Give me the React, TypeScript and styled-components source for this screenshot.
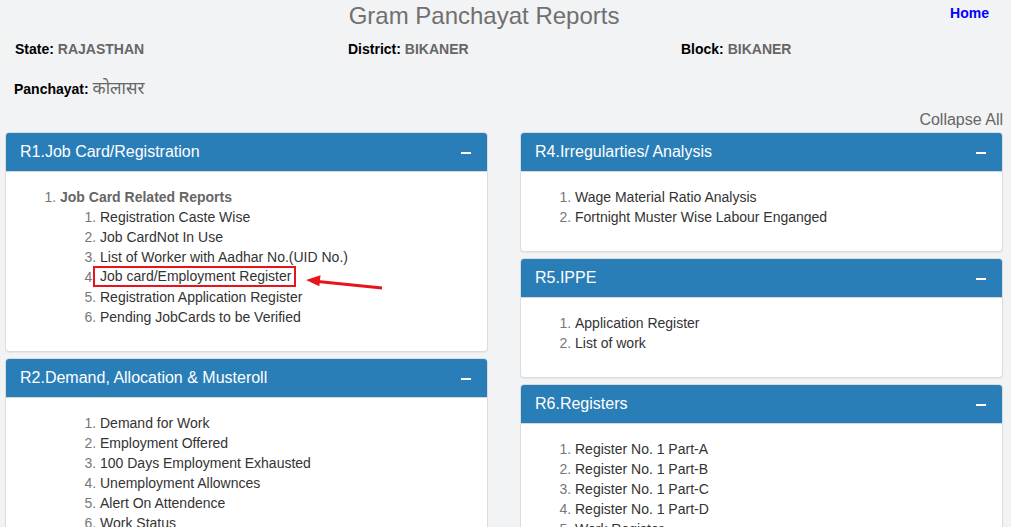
import styled, { createGlobalStyle } from 'styled-components';

type ReportItem = {
	label: string;
	highlighted?: boolean;
};

type Section = {
	title: string;
	heading?: string;
	items: ReportItem[];
};

const GlobalStyle = createGlobalStyle`
	body {
		margin: 0;
		background: #f2f3f5;
		font-family: 'Liberation Sans', Arial, sans-serif;
		color: #333;
	}
`;

const Page = styled.div`
	width: 1011px;
	height: 527px;
	overflow: hidden;
`;

const TopBar = styled.div`
	display: flex;
	align-items: flex-start;
	height: 32px;
`;

const Title = styled.h1`
	flex: 1;
	margin: 2px 0 0;
	padding-left: 18px;
	text-align: center;
	font-size: 24px;
	line-height: 28px;
	font-weight: normal;
	color: #707070;
`;

const HomeLink = styled.a`
	margin: 4px 22px 0 0;
	font-size: 14px;
	line-height: 18px;
	font-weight: bold;
	color: #0000ff;
	text-decoration: none;
`;

const InfoGrid = styled.div`
	display: grid;
	grid-template-columns: repeat(3, 333px);
	padding-left: 15px;
	margin-top: 8px;
`;

const InfoRow = styled.div`
	padding-left: 14px;
	margin-top: 21px;
`;

const Label = styled.span`
	font-size: 14px;
	line-height: 18px;
	font-weight: bold;
	color: #000;
`;

const Value = styled.span<{ $hindi?: boolean }>`
	font-size: ${(p) => (p.$hindi ? '17px' : '14px')};
	line-height: ${(p) => (p.$hindi ? '20px' : '18px')};
	font-weight: ${(p) => (p.$hindi ? 'normal' : 'bold')};
	color: #666;
	font-family: 'Liberation Sans', 'Noto Sans', 'Noto Sans Devanagari', sans-serif;
`;

const CollapseBar = styled.div`
	text-align: right;
	padding-right: 8px;
	margin-top: 11px;
	font-size: 16px;
	line-height: 20px;
	color: #666;
`;

const Columns = styled.div`
	display: grid;
	grid-template-columns: 483px 483px;
	gap: 32px;
	padding-left: 5px;
	margin-top: 2px;
	align-items: start;
`;

const Column = styled.div`
	display: flex;
	flex-direction: column;
	gap: 6px;
`;

const Panel = styled.div`
	background: #fff;
	border: 1px solid #dcdcdc;
	border-radius: 4px;
	box-shadow: 0 1px 1px rgba(0, 0, 0, 0.05);
	overflow: hidden;
`;

const PanelHeader = styled.div`
	display: flex;
	align-items: center;
	justify-content: space-between;
	height: 38px;
	padding: 0 16px 0 14px;
	background: #2a7eb7;
	color: #fff;
	font-size: 16px;
`;

const Minus = styled.span`
	width: 10px;
	height: 2px;
	background: #fff;
	margin-top: 1px;
`;

const PanelBody = styled.div`
	padding: 15px 15px 14px 14px;
	border-top: 1px solid #d6d6d6;
`;

const List = styled.ol<{ $indent?: boolean }>`
	margin: 0 0 10px;
	padding-left: ${(p) => (p.$indent ? '80px' : '40px')};
	font-size: 14px;
	line-height: 20px;
	color: #333;
	& li::marker {
		color: #777;
		font-weight: normal;
	}
`;

const SubList = styled.ol`
	margin: 0;
	padding-left: 40px;
	font-weight: normal;
	color: #333;
`;

const Heading = styled.li`
	font-weight: bold;
	color: #666;
`;

const Highlight = styled.span`
	position: relative;
	display: inline-block;
	margin: -1px 0 0 -7px;
	padding: 0 3px 0 5px;
	line-height: 17px;
	border: 2px solid #e8141b;
	vertical-align: top;
`;

const Arrow = styled.svg`
	position: absolute;
	left: calc(100% + 10px);
	top: 4px;
`;

const left: Section[] = [
	{
		title: 'R1.Job Card/Registration',
		heading: 'Job Card Related Reports',
		items: [
			{ label: 'Registration Caste Wise' },
			{ label: 'Job CardNot In Use' },
			{ label: 'List of Worker with Aadhar No.(UID No.)' },
			{ label: 'Job card/Employment Register', highlighted: true },
			{ label: 'Registration Application Register' },
			{ label: 'Pending JobCards to be Verified' },
		],
	},
	{
		title: 'R2.Demand, Allocation & Musteroll',
		items: [
			{ label: 'Demand for Work' },
			{ label: 'Employment Offered' },
			{ label: '100 Days Employment Exhausted' },
			{ label: 'Unemployment Allownces' },
			{ label: 'Alert On Attendence' },
			{ label: 'Work Status' },
		],
	},
];

const right: Section[] = [
	{
		title: 'R4.Irregularties/ Analysis',
		items: [
			{ label: 'Wage Material Ratio Analysis' },
			{ label: 'Fortnight Muster Wise Labour Enganged' },
		],
	},
	{
		title: 'R5.IPPE',
		items: [{ label: 'Application Register' }, { label: 'List of work' }],
	},
	{
		title: 'R6.Registers',
		items: [
			{ label: 'Register No. 1 Part-A' },
			{ label: 'Register No. 1 Part-B' },
			{ label: 'Register No. 1 Part-C' },
			{ label: 'Register No. 1 Part-D' },
			{ label: 'Work Register' },
		],
	},
];

function Item({ item }: { item: ReportItem }) {
	if (!item.highlighted) return <li>{item.label}</li>;
	return (
		<li>
			<Highlight>
				{item.label}
				<Arrow width="80" height="20" viewBox="0 0 80 20">
					<line x1="14" y1="9.4" x2="78" y2="16" stroke="#e8141b" strokeWidth="3" />
					<polygon points="2,8 16.5,3.2 15.3,14.2" fill="#e8141b" />
				</Arrow>
			</Highlight>
		</li>
	);
}

function ReportPanel({ section, indent }: { section: Section; indent?: boolean }) {
	return (
		<Panel>
			<PanelHeader>
				<span>{section.title}</span>
				<Minus />
			</PanelHeader>
			<PanelBody>
				{section.heading ? (
					<List>
						<Heading>
							{section.heading}
							<SubList>
								{section.items.map((item) => (
									<Item key={item.label} item={item} />
								))}
							</SubList>
						</Heading>
					</List>
				) : (
					<List $indent={indent}>
						{section.items.map((item) => (
							<Item key={item.label} item={item} />
						))}
					</List>
				)}
			</PanelBody>
		</Panel>
	);
}

export default function App() {
	return (
		<Page>
			<GlobalStyle />
			<TopBar>
				<Title>Gram Panchayat Reports</Title>
				<HomeLink href="#">Home</HomeLink>
			</TopBar>
			<InfoGrid>
				<div>
					<Label>State: </Label>
					<Value>RAJASTHAN</Value>
				</div>
				<div>
					<Label>District: </Label>
					<Value>BIKANER</Value>
				</div>
				<div>
					<Label>Block: </Label>
					<Value>BIKANER</Value>
				</div>
			</InfoGrid>
			<InfoRow>
				<Label>Panchayat: </Label>
				<Value $hindi>कोलासर</Value>
			</InfoRow>
			<CollapseBar>Collapse All</CollapseBar>
			<Columns>
				<Column>
					<ReportPanel section={left[0]} />
					<ReportPanel section={left[1]} indent />
				</Column>
				<Column>
					{right.map((s) => (
						<ReportPanel key={s.title} section={s} />
					))}
				</Column>
			</Columns>
		</Page>
	);
}
